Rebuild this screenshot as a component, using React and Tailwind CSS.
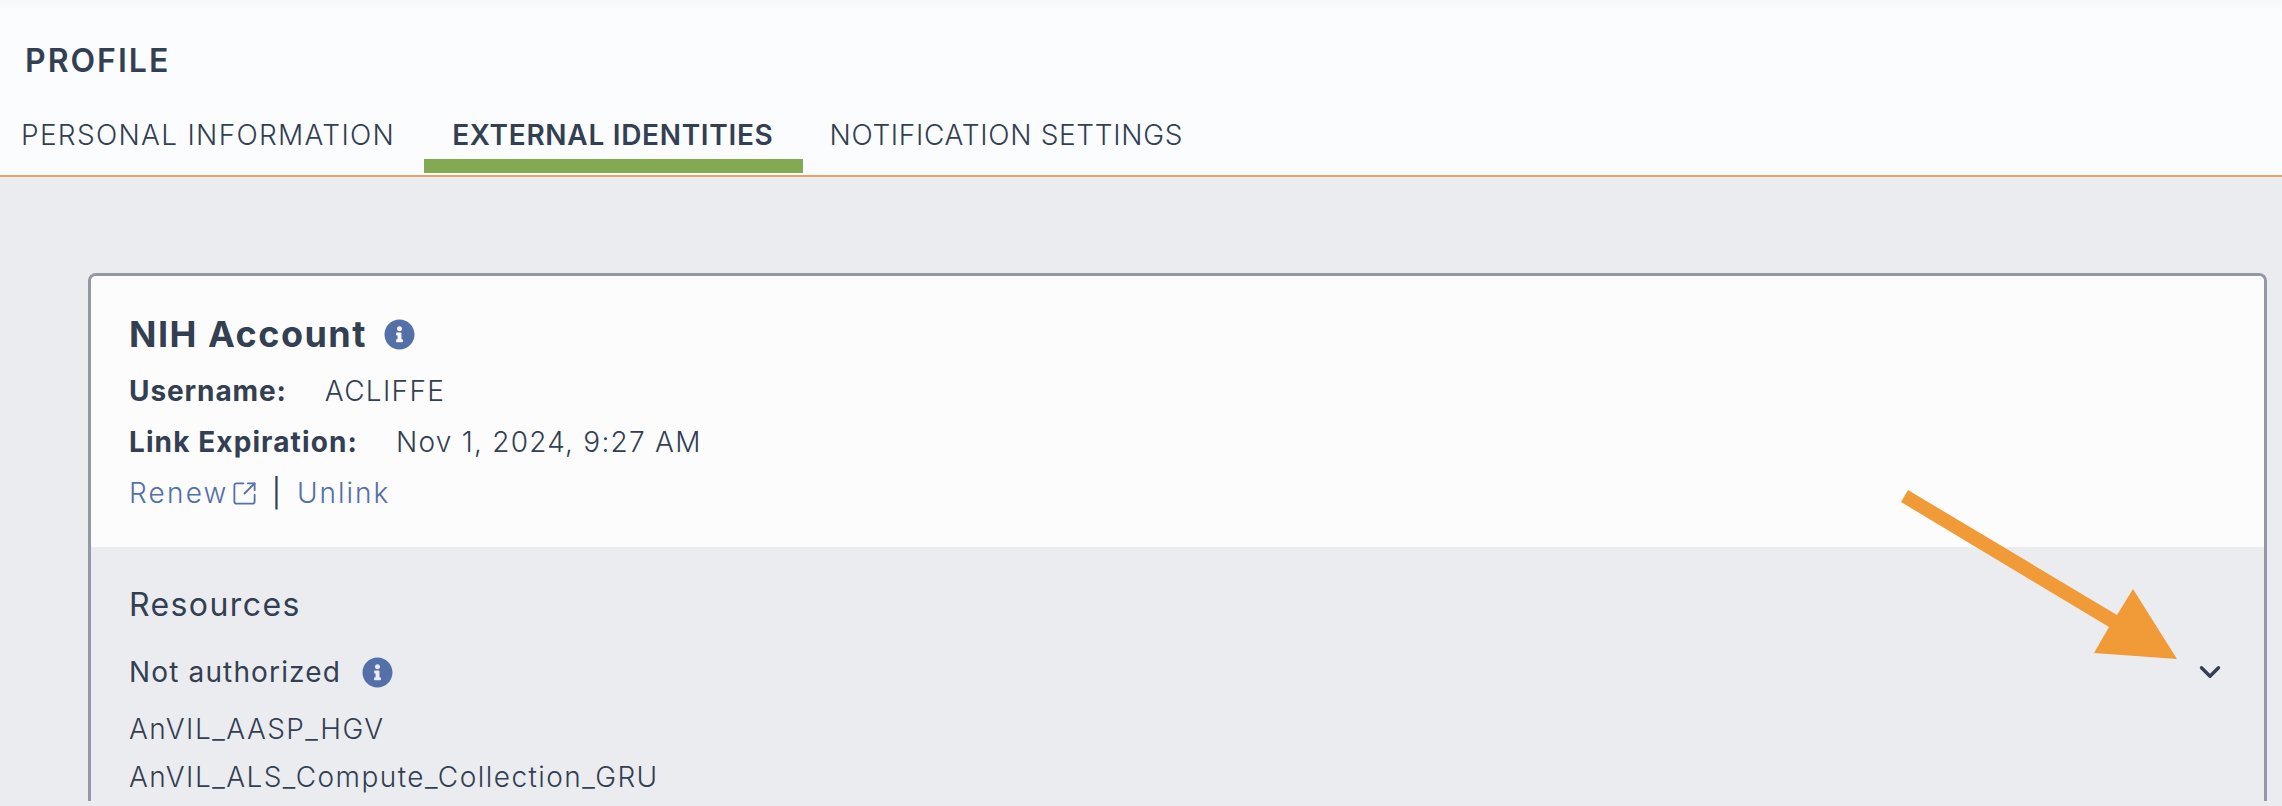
import { ChevronDown, SquareArrowOutUpRight } from 'lucide-react';
import { FaInfoCircle } from 'react-icons/fa';

export default function App() {
  return (
    <div className="relative h-[806px] overflow-hidden bg-[#ebecf0] font-['Inter',sans-serif] text-[#333f52]">
      {/* Header */}
      <header className="h-[177px] border-b-2 border-[#e9a26e] bg-linear-to-b from-[#f7f8fa] to-[#fbfcfe] to-[6%]">
        <h1 className="pl-[25px] pt-[43px] text-[32px] leading-[36px] font-semibold tracking-[2px]">PROFILE</h1>
        <nav className="mt-[37px] flex pl-[21px] text-[28px] leading-[38px]">
          <div className="pr-[29px] font-light tracking-[1.3px]">PERSONAL INFORMATION</div>
          <div className="h-[57px] border-b-[14px] border-[#82aa52] pl-[28px] pr-[29px] font-semibold tracking-[0.7px]">EXTERNAL IDENTITIES</div>
          <div className="pl-[27px] pr-[28px] font-light tracking-[0.67px]">NOTIFICATION SETTINGS</div>
        </nav>
      </header>

      {/* Account card */}
      <main className="pl-[88px] pr-[15px] pt-[96px]">
        <section className="rounded-t-lg border-x-[3px] border-t-[3px] border-[#9498a5]">
          <div className="h-[271px] rounded-t-[5px] bg-[#fcfcfc] pl-[38px] pt-[36px]">
            <div className="flex items-center gap-[17px]">
              <h2 className="text-[36px] leading-[44px] font-bold tracking-[1.5px]">NIH Account</h2>
              <FaInfoCircle className="h-[31px] w-[31px] text-[#5470a8]" />
            </div>
            <div className="mt-[16px] flex text-[28px] leading-[38px]">
              <span className="font-bold tracking-[0.9px]">Username:</span>
              <span className="ml-[38px] font-light tracking-[1.3px]">ACLIFFE</span>
            </div>
            <div className="mt-[13px] flex text-[28px] leading-[38px]">
              <span className="font-bold tracking-[1.1px]">Link Expiration:</span>
              <span className="ml-[38px] font-light tracking-[1.25px]">Nov 1, 2024, 9:27 AM</span>
            </div>
            <div className="mt-[13px] flex items-center text-[28px] leading-[38px] font-light text-[#5370a8]">
              <span className="tracking-[2.2px]">Renew</span>
              <SquareArrowOutUpRight className="ml-[2px] h-[27px] w-[27px]" strokeWidth={1.6} />
              <span className="ml-[14px] font-normal text-[#333f52]">|</span>
              <span className="ml-[16px] tracking-[2px]">Unlink</span>
            </div>
          </div>

          <div className="pl-[38px] pr-[37px] pt-[38px]">
            <h3 className="text-[32px] leading-[40px] font-normal tracking-[1.4px]">Resources</h3>
            <div className="mt-[28px] flex h-[38px] items-center justify-between">
              <div className="flex items-center gap-[21px]">
                <span className="text-[28px] leading-[38px] font-normal tracking-[1.15px]">Not authorized</span>
                <FaInfoCircle className="h-[31px] w-[31px] text-[#5470a8]" />
              </div>
              <ChevronDown className="h-[34px] w-[34px]" strokeWidth={2.4} />
            </div>
            <div className="mt-[14px] text-[28px] leading-[48px] font-light tracking-[1.45px]">
              <div>AnVIL_AASP_HGV</div>
              <div>AnVIL_ALS_Compute_Collection_GRU</div>
            </div>
          </div>
        </section>
      </main>

      {/* Annotation arrow drawn over the page */}
      <svg className="absolute left-0 top-0 h-[806px] w-[2282px]" viewBox="0 0 2282 806">
        <polygon
          fill="#f19a38"
          points="1908,490 2117,615 2133,589 2177,659 2094,653 2109,627 1901,502"
        />
      </svg>
    </div>
  );
}
